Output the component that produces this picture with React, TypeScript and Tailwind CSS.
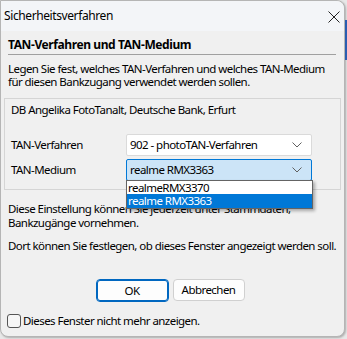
function Chevron() {
  return (
    <svg width="10" height="6" viewBox="0 0 10 6" className="text-[#606060]">
      <path d="M0.5 0.5 L5 5 L9.5 0.5" fill="none" stroke="currentColor" strokeWidth="1" />
    </svg>
  );
}

function Select({ value, active }: { value: string; active?: boolean }) {
  return (
    <div
      className={
        "w-[186px] h-[22px] flex items-center justify-between pl-[3px] pr-[9px] rounded-[2px] border " +
        (active ? "bg-[#cce4f7] border-[#0078d7]" : "bg-white border-[#dadada]")
      }
    >
      <span>{value}</span>
      <Chevron />
    </div>
  );
}

export default function App() {
  return (
    <div
      className="w-[347px] h-[339px] bg-[#e8e8e8] relative overflow-hidden text-[11.5px] text-black whitespace-nowrap tracking-[-0.55px]"
      style={{ fontFamily: '"Noto Sans", "Liberation Sans", sans-serif' }}
    >
      <div className="w-[345px] h-[337px] bg-[#f0f0f0] border border-[#b5b5b5] rounded-tr-[8px] rounded-b-[8px] flex flex-col shadow-[1px_1px_2px_rgba(0,0,0,0.25)]">
        <div className="h-[30px] shrink-0 bg-[#f3f5f8] rounded-tr-[8px] flex items-center justify-between pl-[3px] pr-[3px]">
          <span className="text-[12px] leading-none tracking-[-0.4px]">Sicherheitsverfahren</span>
          <svg width="12" height="12" viewBox="0 0 12 12" className="mr-[1px] mt-[1px]">
            <path d="M0.5 0.5 L11.5 11.5 M11.5 0.5 L0.5 11.5" stroke="#222" strokeWidth="1" />
          </svg>
        </div>

        <div className="px-[7px] pt-[6px] shrink-0">
          <div className="font-bold leading-[16px] text-[12px] tracking-[-0.4px]">TAN-Verfahren und TAN-Medium</div>
          <div className="mt-[1px] h-px bg-[#a0a0a0] mr-[1px]" />
          <p className="mt-[7px] leading-[13px]">
            Legen Sie fest, welches TAN-Verfahren und welches TAN-Medium
            <br />
            für diesen Bankzugang verwendet werden sollen.
          </p>
        </div>

        <div className="relative shrink-0 mx-[3px] mt-[10px] h-[92px] border border-[#d5d5d5] px-[6px]">
          <div className="mt-[4px] leading-[14px]">DB Angelika FotoTanalt, Deutsche Bank, Erfurt</div>
          <div className="mt-[17px] flex items-center">
            <span className="w-[115px]">TAN-Verfahren</span>
            <Select value="902 - photoTAN-Verfahren" />
          </div>
          <div className="mt-[3px] flex items-center">
            <span className="w-[115px]">TAN-Medium</span>
            <Select value="realme RMX3363" active />
          </div>
          <div className="absolute left-[121px] top-[81px] w-[187px] bg-white border border-[#646464] shadow-[2px_2px_3px_rgba(0,0,0,0.3)] z-10 leading-[13px]">
            <div className="pl-[1px] h-[13px]">realmeRMX3370</div>
            <div className="pl-[1px] h-[14px] bg-[#0078d7] text-white">realme RMX3363</div>
          </div>
        </div>

        <div className="px-[7px] pt-[12px] shrink-0">
          <p className="leading-[14px]">
            Diese Einstellung können Sie jederzeit unter Stammdaten,
            <br />
            Bankzugänge vornehmen.
          </p>
          <p className="mt-[9px] leading-[14px]">
            Dort können Sie festlegen, ob dieses Fenster angezeigt werden soll.
          </p>
        </div>

        <div className="mt-[26px] shrink-0 flex justify-center gap-[4px] pr-[5px]">
          <button className="w-[73px] h-[23px] bg-[#fdfdfd] border border-[#0067c0] rounded-[4px] shadow-[inset_0_0_0_1px_#0067c0]">
            OK
          </button>
          <button className="w-[72px] h-[22px] bg-[#fdfdfd] border border-[#d0d0d0] rounded-[4px]">
            Abbrechen
          </button>
        </div>

        <label className="mt-[10px] shrink-0 ml-[6px] flex items-center gap-[2px]">
          <span className="w-[14px] h-[14px] border border-[#555] rounded-[3px] bg-[#f6f6f6]" />
          <span>Dieses Fenster nicht mehr anzeigen.</span>
        </label>
      </div>
      <div className="absolute right-0 top-[20px] w-[2px] h-[40px] bg-[#2a5db0]" />
    </div>
  );
}
